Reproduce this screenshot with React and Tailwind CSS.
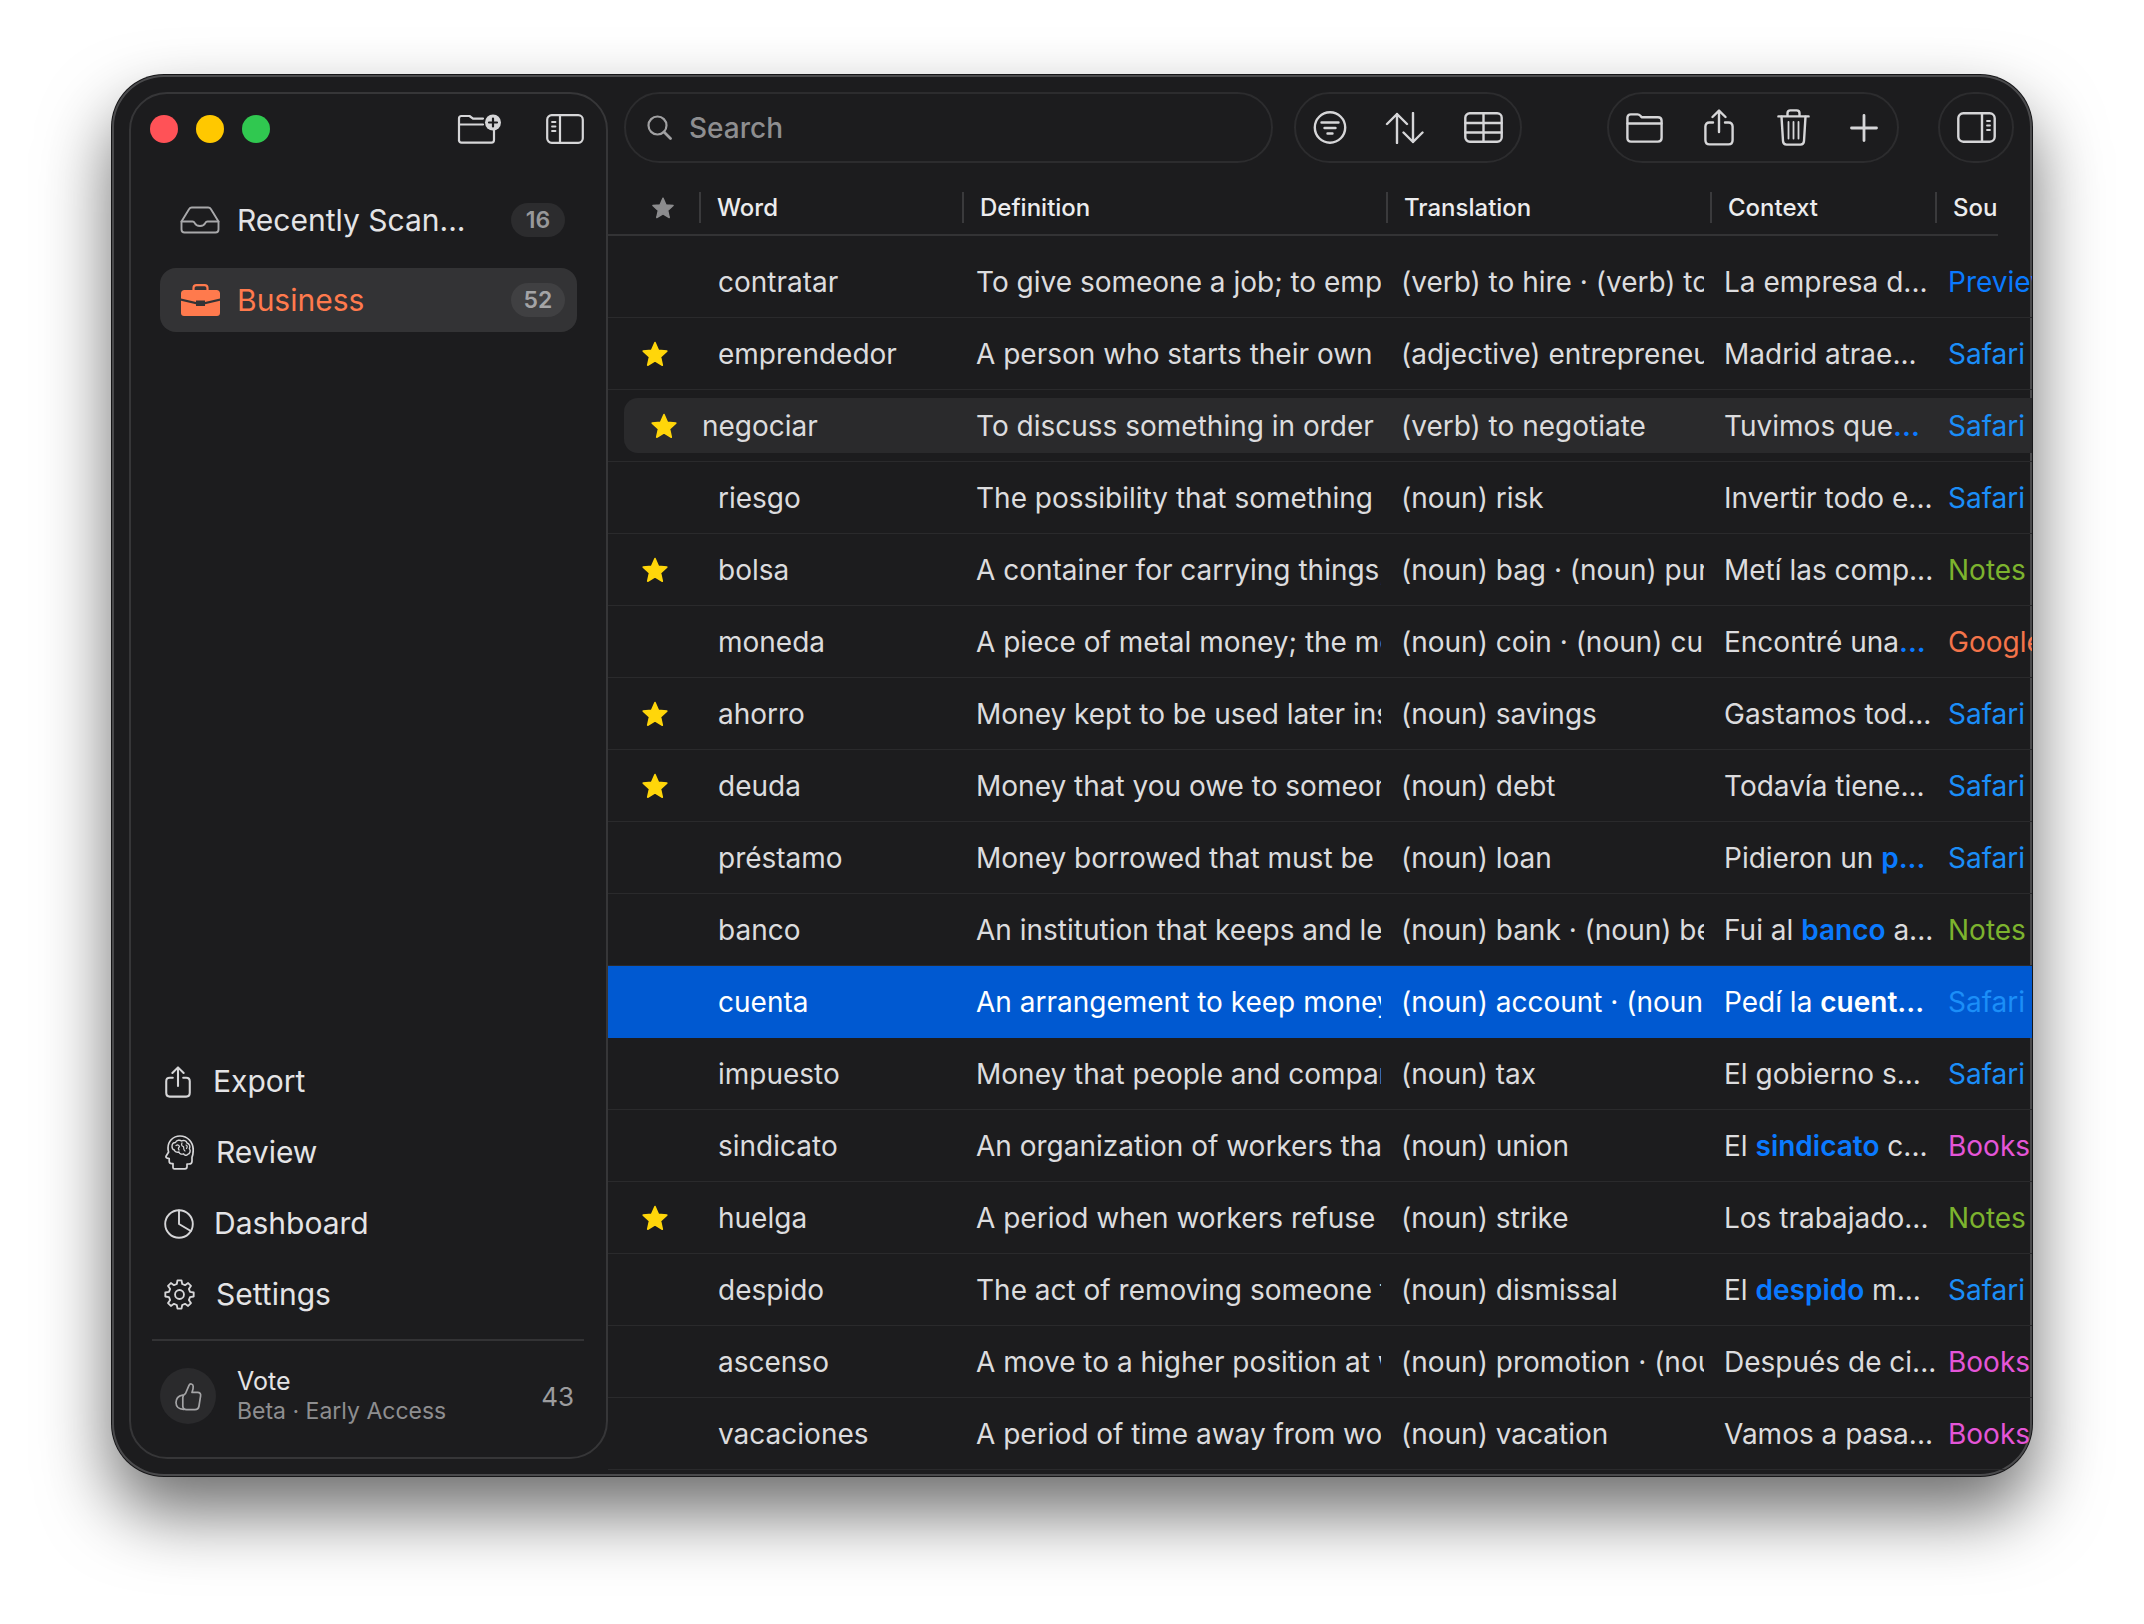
import React from 'react';

const INK = '#d6d6d8';

const gearPoints = () => {
    const pts = [];
    for (let i = 0; i < 8; i++) {
        const a = (i * Math.PI) / 4 - Math.PI / 2;
        const step = Math.PI / 4;
        const at = (r, off) => `${(16 + r * Math.cos(a + off * step)).toFixed(2)} ${(16 + r * Math.sin(a + off * step)).toFixed(2)}`;
        pts.push(`${i === 0 ? 'M' : 'L'}${at(11.2, -0.32)} L${at(14.8, -0.18)} L${at(14.8, 0.18)} L${at(11.2, 0.32)}`);
    }
    return pts.join(' ') + ' Z';
};

const Stroke = ({ w, h, vw, vh, sw = 2, color = INK, children, className = '' }) => (
    <svg
        width={w}
        height={h}
        viewBox={`0 0 ${vw} ${vh}`}
        fill="none"
        stroke={color}
        strokeWidth={sw}
        strokeLinecap="round"
        strokeLinejoin="round"
        className={`shrink-0 ${className}`}
    >
        {children}
    </svg>
);

const FolderPlusIcon = () => (
    <Stroke w={44} h={30} vw={44} vh={30} sw={2.2}>
        <path d="M2 27V4.5C2 2.8 3 2 4.5 2H12.5L16 4.6H26M2 10.5H26M37 15V26C37 27.8 36 28.6 34.5 28.6H4.5C3 28.6 2 27.8 2 26" />
        <circle cx="36" cy="8.5" r="8" fill={INK} stroke="none" />
        <path d="M36 4.5V12.5M32 8.5H40" stroke="#1c1c1e" strokeWidth="2.2" />
    </Stroke>
);

const LeftPanelIcon = () => (
    <Stroke w={38} h={30} vw={38} vh={30} sw={2.2}>
        <rect x="1.2" y="1.2" width="35.6" height="27.6" rx="4.5" />
        <path d="M14 1.5V28.5" />
        <path d="M6 8H9.5M6 12.5H9.5M6 17H9.5" strokeWidth="1.8" />
    </Stroke>
);

const RightPanelIcon = () => (
    <Stroke w={39} h={31} vw={39} vh={31} sw={2.4}>
        <rect x="1.3" y="1.3" width="36.4" height="28.4" rx="5" />
        <path d="M25 1.5V29.5" />
        <path d="M30 9H33M30 13.5H33M30 18H33" strokeWidth="1.8" />
    </Stroke>
);

const InboxIcon = () => (
    <Stroke w={40} h={28} vw={40} vh={28} sw={1.9} color="#a8a8aa">
        <path d="M1.5 15.5L9 3.2C9.6 2.2 10.4 1.5 11.8 1.5H28.2C29.6 1.5 30.4 2.2 31 3.2L38.5 15.5V23.5C38.5 25.5 37.4 26.5 35.5 26.5H4.5C2.6 26.5 1.5 25.5 1.5 23.5Z" />
        <path d="M1.5 15.5H12.5C13.8 15.5 14.2 16 14.8 17.2C15.6 19 17.4 20 20 20S24.4 19 25.2 17.2C25.8 16 26.2 15.5 27.5 15.5H38.5" />
    </Stroke>
);

const BriefcaseIcon = () => (
    <svg width="39" height="32" viewBox="0 0 39 32" className="shrink-0">
        <path d="M12.5 7V4C12.5 2.2 13.6 1.2 15.4 1.2H23.6C25.4 1.2 26.5 2.2 26.5 4V7" fill="none" stroke="#ff7a4d" strokeWidth="2.2" />
        <path d="M0 9.5C0 7.4 1.4 6 3.5 6H35.5C37.6 6 39 7.4 39 9.5V14.5L24 18V16.5H15V18L0 14.5Z" fill="#ff7a4d" />
        <path d="M0 16.8L15 20.3V22H24V20.3L39 16.8V29C39 30.8 37.8 32 36 32H3C1.2 32 0 30.8 0 29Z" fill="#ff7a4d" />
    </svg>
);

const SearchIcon = () => (
    <Stroke w={25} h={25} vw={25} vh={25} sw={2.2} color="#a0a0a2">
        <circle cx="10.5" cy="10.5" r="9" />
        <path d="M17 17L23.5 23.5" strokeWidth="2.8" />
    </Stroke>
);

const FilterIcon = () => (
    <Stroke w={34} h={33} vw={34} vh={33} sw={2.4}>
        <circle cx="17" cy="16.5" r="15.2" />
        <path d="M8.5 11.5H25.5M11.5 17H22.5M14.5 22.5H19.5" />
    </Stroke>
);

const SortIcon = () => (
    <Stroke w={39} h={32} vw={39} vh={32} sw={2.4}>
        <path d="M12 31V2M2 12L12 2L22 12" />
        <path d="M28 1V30M18.5 20.5L28 30L37.5 20.5" />
    </Stroke>
);

const TableIcon = () => (
    <Stroke w={39} h={31} vw={39} vh={31} sw={2.4}>
        <rect x="1.3" y="1.3" width="36.4" height="28.4" rx="4.5" />
        <path d="M1.5 11H37.5M1.5 20.5H37.5M19.5 1.5V29.5" />
    </Stroke>
);

const FolderIcon = () => (
    <Stroke w={37} h={30} vw={37} vh={30} sw={2.4}>
        <path d="M1.4 5C1.4 2.6 2.6 1.4 4.8 1.4H11.5C12.8 1.4 13.6 1.9 14.4 2.8L15.6 4.2H32C34.4 4.2 35.6 5.4 35.6 7.8V25C35.6 27.4 34.4 28.6 32 28.6H5C2.6 28.6 1.4 27.4 1.4 25Z" />
        <path d="M1.6 10.5H35.4" />
    </Stroke>
);

const ShareIcon = ({ w = 30, h = 37, sw = 2.4 }) => (
    <Stroke w={w} h={h} vw={30} vh={37} sw={sw}>
        <path d="M9 13.5H5.5C2.8 13.5 1.4 14.9 1.4 17.6V31C1.4 33.9 2.8 35.4 5.5 35.4H24.5C27.2 35.4 28.6 33.9 28.6 31V17.6C28.6 14.9 27.2 13.5 24.5 13.5H21" />
        <path d="M15 23V2M8.5 8L15 1.6L21.5 8" />
    </Stroke>
);

const TrashIcon = () => (
    <Stroke w={33} h={37} vw={33} vh={37} sw={2.4}>
        <path d="M1.4 7.4H31.6M10.5 7V4.2C10.5 2.4 11.5 1.4 13.3 1.4H19.7C21.5 1.4 22.5 2.4 22.5 4.2V7" />
        <path d="M4.5 7.6L6 32C6.1 34.3 7.4 35.6 9.6 35.6H23.4C25.6 35.6 26.9 34.3 27 32L28.5 7.6" />
        <path d="M11.5 13V29.5M16.5 13V29.5M21.5 13V29.5" strokeWidth="1.8" />
    </Stroke>
);

const PlusIcon = () => (
    <Stroke w={28} h={28} vw={28} vh={28} sw={2.8}>
        <path d="M14 1.5V26.5M1.5 14H26.5" />
    </Stroke>
);

const BrainHeadIcon = () => (
    <Stroke w={29} h={35} vw={29} vh={35} sw={1.7}>
        <path d="M9.5 33.8H20C21.2 33.8 22 33 22 31.8V29H24C26 29 27 28 27 26.2V22.4C28 20 28.2 17.5 28.2 15C28.2 7 22.5 1 15 1C8 1 3 6.4 3 13C3 14.8 3.2 16 3.6 17L1.2 21C.6 22 1.2 23 2.2 23.2L4.2 23.6V26.2C4.2 27.8 5.4 28.6 7 28.6H8V32.4C8 33.2 8.6 33.8 9.5 33.8Z" />
        <path d="M7 11.5C7 8.5 9 7.5 10.5 7.5C11.5 5 15 4.6 16.5 6C18.5 4.8 21.5 5.6 22 8C24.5 8.8 25.5 11.5 24.4 13.6C26 15.5 25 19 22.6 19.4C21.5 21 19.2 20.2 18.6 18.8C16.5 19.6 14.2 18.6 14 17C11.8 17.6 9.6 16.6 9.4 15C7.8 14.6 7 13.2 7 11.5Z" strokeWidth="1.4" />
        <path d="M11 10.5C12.5 9.5 14 10 14.5 11.5C13.5 12.5 12.5 13.5 14 15M17 8C16 10 17 11.5 18.5 11.5C19 13 18 15 20 16M21 10C22.5 10.5 22.5 12 21.5 13.5" strokeWidth="1.2" />
    </Stroke>
);

const PieIcon = () => (
    <Stroke w={30} h={30} vw={30} vh={30} sw={1.9}>
        <circle cx="15" cy="15" r="13.8" />
        <path d="M15 1.5V15L26.8 22" />
    </Stroke>
);

const GearIcon = () => (
    <Stroke w={31} h={31} vw={32} vh={32} sw={1.9}>
        <path d={gearPoints()} />
        <circle cx="16" cy="16" r="4.6" />
    </Stroke>
);

const ThumbIcon = () => (
    <Stroke w={27} h={29} vw={27} vh={29} sw={1.7} color="#a4a4a6">
        <path d="M10.5 11.5L14 3.4C14.9 1.2 18 1.6 18.2 4.2C18.4 6.4 17.6 8.6 17 10.4H22.6C24.8 10.4 26 11.8 25.6 13.8L24 24C23.6 26.4 22.2 27.6 20 27.6H11.5C9.2 27.6 7.8 26.2 7.8 24V15.5C7.8 13.5 8.8 12.5 10.5 11.5Z" />
        <path d="M7.6 13.2C3.6 14 1 17 1 20.6C1 24.6 3.8 27.4 8.4 27.4" />
    </Stroke>
);

const Star = ({ size = 28, color = '#ffd60a' }) => (
    <svg width={size} height={size} viewBox="0 0 28 28" className="shrink-0">
        <path
            d="M14 2.5L17.4 10.3L25.8 11.1L19.5 16.8L21.3 25.2L14 20.8L6.7 25.2L8.5 16.8L2.2 11.1L10.6 10.3Z"
            fill={color}
            stroke={color}
            strokeWidth="1.6"
            strokeLinejoin="round"
        />
    </svg>
);

const sourceColors = {
    Preview: 'text-[#0a7aff]',
    Safari: 'text-[#1b8ef8]',
    Notes: 'text-[#7cb32e]',
    Google: 'text-[#f4744a]',
    Books: 'text-[#e455d8]',
};

const rows = [
    { word: 'contratar', def: 'To give someone a job; to employ someone', trans: '(verb) to hire · (verb) to contract', ctx: ['La empresa d...'], src: 'Preview' },
    { word: 'emprendedor', star: true, def: 'A person who starts their own business', trans: '(adjective) entrepreneurial', ctx: ['Madrid atrae...'], src: 'Safari' },
    { word: 'negociar', star: true, hover: true, def: 'To discuss something in order to reach', trans: '(verb) to negotiate', ctx: ['Tuvimos que', '...'], src: 'Safari' },
    { word: 'riesgo', def: 'The possibility that something bad may', trans: '(noun) risk', ctx: ['Invertir todo e...'], src: 'Safari' },
    { word: 'bolsa', star: true, def: 'A container for carrying things; a stock', trans: '(noun) bag · (noun) purse', ctx: ['Metí las comp...'], src: 'Notes' },
    { word: 'moneda', def: 'A piece of metal money; the money', trans: '(noun) coin · (noun) currency', ctx: ['Encontré una', '...'], src: 'Google' },
    { word: 'ahorro', star: true, def: 'Money kept to be used later instead', trans: '(noun) savings', ctx: ['Gastamos tod...'], src: 'Safari' },
    { word: 'deuda', star: true, def: 'Money that you owe to someone else', trans: '(noun) debt', ctx: ['Todavía tiene...'], src: 'Safari' },
    { word: 'préstamo', def: 'Money borrowed that must be paid back', trans: '(noun) loan', ctx: ['Pidieron un ', 'p...'], src: 'Safari' },
    { word: 'banco', def: 'An institution that keeps and lends money', trans: '(noun) bank · (noun) bench', ctx: ['Fui al ', 'banco', ' a...'], src: 'Notes' },
    { word: 'cuenta', selected: true, def: 'An arrangement to keep money in a bank', trans: '(noun) account · (noun) bill', ctx: ['Pedí la ', 'cuent...'], src: 'Safari' },
    { word: 'impuesto', def: 'Money that people and companies pay', trans: '(noun) tax', ctx: ['El gobierno s...'], src: 'Safari' },
    { word: 'sindicato', def: 'An organization of workers that protects', trans: '(noun) union', ctx: ['El ', 'sindicato', ' c...'], src: 'Books' },
    { word: 'huelga', star: true, def: 'A period when workers refuse to work', trans: '(noun) strike', ctx: ['Los trabajado...'], src: 'Notes' },
    { word: 'despido', def: 'The act of removing someone from a job', trans: '(noun) dismissal', ctx: ['El ', 'despido', ' m...'], src: 'Safari' },
    { word: 'ascenso', def: 'A move to a higher position at work', trans: '(noun) promotion · (noun) rise', ctx: ['Después de ci...'], src: 'Books' },
    { word: 'vacaciones', def: 'A period of time away from work or school', trans: '(noun) vacation', ctx: ['Vamos a pasa...'], src: 'Books' },
];

const Context = ({ parts, selected }) => (
    <>
        {parts.map((part, i) =>
            i % 2 === 1 ? (
                <span key={i} className={`font-semibold ${selected ? 'text-white' : 'text-[#0a7aff]'}`}>
                    {part}
                </span>
            ) : (
                <span key={i}>{part}</span>
            )
        )}
    </>
);

const WordRow = ({ row }) => {
    const { word, star, hover, selected, def, trans, ctx, src } = row;
    const outer = selected ? 'bg-[#0059d1] text-white' : 'border-b border-[#2a2a2c] text-[#dcdcde]';
    const inner = hover ? 'ml-[16px] my-[8px] rounded-l-[14px] bg-[#2a2a2c]' : '';

    return (
        <div className={`flex h-[72px] ${outer}`}>
            <div className={`flex min-w-0 flex-1 items-center overflow-hidden ${inner}`}>
                <div className={`flex shrink-0 justify-center ${hover ? 'w-[78px] pl-[1px]' : 'w-[110px] pr-[16px]'}`}>
                    {star && <Star />}
                </div>
                <div className={`shrink-0 ${hover ? 'w-[274px]' : 'w-[258px]'}`}>{word}</div>
                <div className="w-[405px] shrink-0 overflow-hidden whitespace-nowrap">{def}</div>
                <div className="ml-[20px] w-[303px] shrink-0 overflow-hidden whitespace-nowrap">{trans}</div>
                <div className="ml-[20px] w-[224px] shrink-0 overflow-hidden whitespace-nowrap">
                    <Context parts={ctx} selected={selected} />
                </div>
                <div className={`shrink-0 whitespace-nowrap ${sourceColors[src]}`}>{src}</div>
            </div>
        </div>
    );
};

const HeaderCell = ({ label, className }) => (
    <div className={`flex h-full items-center ${className}`}>
        <span className="h-[31px] w-[2px] shrink-0 bg-[#3a3a3c]" />
        <span className="ml-[16px] whitespace-nowrap">{label}</span>
    </div>
);

const Pill = ({ className, children }) => (
    <div className={`flex h-[71px] shrink-0 items-center rounded-[36px] border-2 border-[#2c2c2e] ${className}`}>
        {children}
    </div>
);

const App = () => {
    const bottomNav = [
        { label: 'Export', icon: <ShareIcon w={26} h={32} sw={2.4} />, cls: 'pl-[34px] gap-[22px]' },
        { label: 'Review', icon: <BrainHeadIcon />, cls: 'pl-[34px] gap-[22px]' },
        { label: 'Dashboard', icon: <PieIcon />, cls: 'pl-[33px] gap-[20px]' },
        { label: 'Settings', icon: <GearIcon />, cls: 'pl-[33px] gap-[21px]' },
    ];

    return (
        <div className="h-[1624px] w-[2144px] overflow-hidden bg-white pl-[112px] pt-[75px] font-[family-name:Inter,sans-serif]">
            <div className="flex h-[1401px] w-[1920px] overflow-hidden rounded-[52px] bg-[#1c1c1e] shadow-[inset_0_0_0_2px_#4a4a4c,0_0_0_1px_#161618,0_36px_70px_rgba(0,0,0,0.58)]">
                {/* sidebar */}
                <aside className="ml-[17px] mt-[17px] flex h-[1367px] w-[479px] shrink-0 flex-col rounded-[38px] border-2 border-[#363638] text-[#e4e4e6]">
                    <div className="flex h-[70px] shrink-0 items-center pl-[19px]">
                        <div className="flex gap-[18px]">
                            <span className="h-[28px] w-[28px] rounded-full bg-[#ff5257]" />
                            <span className="h-[28px] w-[28px] rounded-full bg-[#ffc800]" />
                            <span className="h-[28px] w-[28px] rounded-full bg-[#30c850]" />
                        </div>
                        <div className="ml-auto flex items-center gap-[45px] pr-[22px]">
                            <FolderPlusIcon />
                            <LeftPanelIcon />
                        </div>
                    </div>

                    <nav className="mt-[24px] flex flex-col gap-[16px] px-[29px] text-[30px]">
                        <div className="flex h-[64px] items-center pl-[20px] pr-[12px]">
                            <InboxIcon />
                            <span className="ml-[17px]">Recently Scan...</span>
                            <span className="ml-auto flex h-[34px] w-[54px] items-center justify-center rounded-full bg-[#2c2c2e] text-[23px] font-semibold text-[#98989a]">
                                16
                            </span>
                        </div>
                        <div className="flex h-[64px] items-center rounded-[16px] bg-[#333335] pl-[21px] pr-[12px] text-[#ff7a4d]">
                            <BriefcaseIcon />
                            <span className="ml-[17px]">Business</span>
                            <span className="ml-auto flex h-[34px] w-[54px] items-center justify-center rounded-full bg-[#404042] text-[23px] font-semibold text-[#a4a4a6]">
                                52
                            </span>
                        </div>
                    </nav>

                    <div className="mt-auto flex flex-col text-[30px]">
                        {bottomNav.map((item) => (
                            <div key={item.label} className={`flex h-[71px] items-center ${item.cls}`}>
                                {item.icon}
                                <span>{item.label}</span>
                            </div>
                        ))}
                    </div>

                    <div className="ml-[21px] mr-[22px] mt-[9px] h-[2px] shrink-0 bg-[#333335]" />

                    <div className="flex h-[116px] shrink-0 items-center pb-[6px] pl-[29px] pr-[32px]">
                        <div className="flex h-[56px] w-[56px] items-center justify-center rounded-full bg-[#2a2a2c]">
                            <ThumbIcon />
                        </div>
                        <div className="ml-[21px]">
                            <div className="text-[25px] leading-[31px]">Vote</div>
                            <div className="text-[23px] leading-[29px] text-[#8e8e90]">Beta · Early Access</div>
                        </div>
                        <span className="ml-auto text-[26px] text-[#9c9c9e]">43</span>
                    </div>
                </aside>

                {/* word list */}
                <main className="w-[1424px] shrink-0 overflow-hidden pt-[17px]">
                    <div className="flex pl-[16px]">
                        <Pill className="w-[649px] pl-[21px]">
                            <SearchIcon />
                            <span className="ml-[17px] text-[28px] font-medium text-[#8e8e90]">Search</span>
                        </Pill>
                        <Pill className="ml-[21px] w-[228px] pl-[17px]">
                            <FilterIcon />
                            <span className="ml-[38px]">
                                <SortIcon />
                            </span>
                            <span className="ml-[40px]">
                                <TableIcon />
                            </span>
                        </Pill>
                        <Pill className="ml-[85px] w-[292px] pl-[17px]">
                            <FolderIcon />
                            <span className="ml-[41px]">
                                <ShareIcon />
                            </span>
                            <span className="ml-[43px]">
                                <TrashIcon />
                            </span>
                            <span className="ml-[40px]">
                                <PlusIcon />
                            </span>
                        </Pill>
                        <Pill className="ml-[39px] w-[76px] pl-[17px]">
                            <RightPanelIcon />
                        </Pill>
                    </div>

                    <div className="mt-[18px] flex h-[55px] w-[1390px] items-center overflow-hidden border-b-2 border-[#333335] text-[24px] font-medium text-[#ececee]">
                        <div className="flex w-[91px] shrink-0 justify-center pl-[19px]">
                            <Star size={24} color="#8c8c8e" />
                        </div>
                        <HeaderCell label="Word" className="w-[263px] shrink-0" />
                        <HeaderCell label="Definition" className="w-[424px] shrink-0" />
                        <HeaderCell label="Translation" className="w-[324px] shrink-0" />
                        <HeaderCell label="Context" className="w-[225px] shrink-0" />
                        <HeaderCell label="Source" className="flex-1" />
                    </div>

                    <div className="mt-[10px] text-[28px]">
                        {rows.map((row) => (
                            <WordRow key={row.word} row={row} />
                        ))}
                    </div>
                </main>
            </div>
        </div>
    );
};

export default App;
